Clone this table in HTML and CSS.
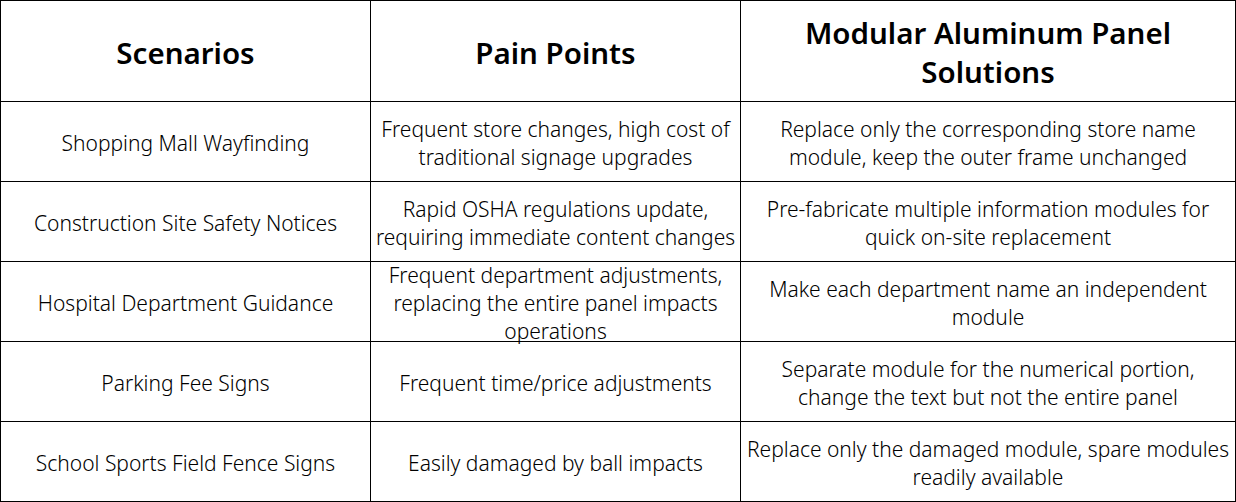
FILE: index.html
```html
<!DOCTYPE html>
<html>
<head>
<meta charset="utf-8">
<link rel="stylesheet" href="styles.css">
</head>
<body>
<div class="table">
  <div class="cell head">Scenarios</div>
  <div class="cell head">Pain Points</div>
  <div class="cell head">Modular Aluminum Panel Solutions</div>

  <div class="cell">Shopping Mall Wayfinding</div>
  <div class="cell">Frequent store changes, high cost of traditional signage upgrades</div>
  <div class="cell">Replace only the corresponding store name module, keep the outer frame unchanged</div>

  <div class="cell">Construction Site Safety Notices</div>
  <div class="cell">Rapid OSHA regulations update, requiring immediate content changes</div>
  <div class="cell">Pre-fabricate multiple information modules for quick on-site replacement</div>

  <div class="cell">Hospital Department Guidance</div>
  <div class="cell">Frequent department adjustments, replacing the entire panel impacts operations</div>
  <div class="cell">Make each department name an independent module</div>

  <div class="cell">Parking Fee Signs</div>
  <div class="cell">Frequent time/price adjustments</div>
  <div class="cell">Separate module for the numerical portion, change the text but not the entire panel</div>

  <div class="cell">School Sports Field Fence Signs</div>
  <div class="cell">Easily damaged by ball impacts</div>
  <div class="cell">Replace only the damaged module, spare modules readily available</div>
</div>
</body>
</html>
```
FILE: styles.css
```css
html, body {
  margin: 0;
  padding: 0;
  background: #fff;
}
.table {
  display: grid;
  grid-template-columns: 370px 370px 495px;
  grid-template-rows: 101px repeat(5, 80px);
  width: 1235px;
  border-right: 1px solid #000;
  border-bottom: 1px solid #000;
  font-family: "Noto Sans", "Noto Sans CJK SC", sans-serif;
  color: #000;
}
.cell {
  box-sizing: border-box;
  border-left: 1px solid #000;
  border-top: 1px solid #000;
  display: flex;
  align-items: center;
  justify-content: center;
  text-align: center;
  font-size: 21px;
  font-weight: 300;
  line-height: 28px;
  padding: 3px 1px 0;
  overflow: visible;
}
.cell:nth-child(3n) {
  padding: 3px 5px 0;
}
.head {
  font-size: 29.5px;
  font-weight: 600;
  line-height: 39px;
  padding: 2px 20px 0;
}
.head:nth-child(3n) {
  padding: 2px 20px 0;
}
```
